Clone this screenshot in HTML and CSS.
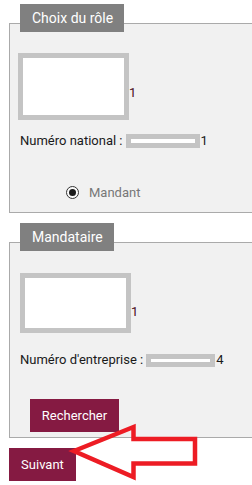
FILE: index.html
```html
<!DOCTYPE html>
<html lang="fr">
<head>
  <meta charset="UTF-8">
  <title>Choix du rôle</title>
  <link rel="stylesheet" href="styles.css">
</head>
<body>
  <div class="bloc bloc-role">
    <div class="titre">Choix du rôle</div>
    <div class="ligne-image">
      <div class="cadre cadre-role"></div>
      <span class="num num-role">1</span>
    </div>
    <div class="ligne-champ">
      <span class="label">Numéro national :</span>
      <span class="champ champ-national"></span>
      <span class="valeur">1</span>
    </div>
    <div class="ligne-radio">
      <span class="radio"></span>
      <span class="radio-label">Mandant</span>
    </div>
  </div>

  <div class="bloc bloc-mandataire">
    <div class="titre">Mandataire</div>
    <div class="ligne-image">
      <div class="cadre cadre-mandataire"></div>
      <span class="num num-mandataire">1</span>
    </div>
    <div class="ligne-champ">
      <span class="label">Numéro d'entreprise :</span>
      <span class="champ champ-entreprise"></span>
      <span class="valeur">4</span>
    </div>
    <button class="bouton bouton-rechercher" type="button">Rechercher</button>
  </div>

  <button class="bouton bouton-suivant" type="button">Suivant</button>

  <svg class="fleche" width="252" height="485" viewBox="0 0 252 485">
    <polygon points="74,451 133.5,427 133.5,439 195,439 195,463.5 133.5,463.5 133.5,477"
             fill="none" stroke="#ed1c24" stroke-width="4.5" />
  </svg>
</body>
</html>
```

FILE: styles.css
```css
html, body {
  overflow: hidden;
}

body {
  margin: 0;
  position: relative;
  width: 252px;
  height: 485px;
  background: #fff;
  font-family: Roboto, "Liberation Sans", sans-serif;
  font-size: 13px;
  color: #1a1a1a;
}

.bloc {
  margin-left: 9px;
  margin-right: -40px;
  border: 1px solid #aaa;
  background: #f1f1f1;
  padding-left: 10px;
}

.bloc-role {
  margin-top: 23px;
  padding-bottom: 13px;
}

.bloc-mandataire {
  margin-top: 29px;
  padding-bottom: 5px;
}

.titre {
  display: block;
  width: fit-content;
  margin-top: -20px;
  height: 28px;
  line-height: 28px;
  padding: 0 11px 0 12px;
  background: #808080;
  color: #fff;
  font-size: 14px;
}

.ligne-image {
  display: flex;
  align-items: flex-end;
}

.bloc-role .ligne-image {
  margin-top: 21px;
  margin-left: -2px;
}

.bloc-mandataire .ligne-image {
  margin-top: 22px;
}

.cadre {
  box-sizing: border-box;
  width: 111px;
  border: 5px solid #c4c4c4;
  background: #fff;
}

.cadre-role {
  height: 67px;
}

.cadre-mandataire {
  height: 60px;
}

.num {
  color: #4a0d1c;
  line-height: 13px;
}

.num-role {
  margin-bottom: 21px;
}

.num-mandataire {
  margin-bottom: 15px;
}

.ligne-champ {
  display: flex;
  align-items: center;
  line-height: 14px;
}

.bloc-role .ligne-champ {
  margin-top: 14px;
}

.bloc-mandataire .ligne-champ {
  margin-top: 20px;
}

.champ {
  box-sizing: border-box;
  border: 5px solid #c4c4c4;
  background: #fff;
  margin-left: 3px;
}

.champ-national {
  width: 74px;
  height: 14px;
}

.champ-entreprise {
  width: 69px;
  height: 13px;
}

.valeur {
  margin-left: 1px;
}

.ligne-radio {
  display: flex;
  align-items: center;
  margin-top: 38px;
  margin-left: 46px;
  height: 13px;
}

.radio {
  box-sizing: border-box;
  width: 13px;
  height: 13px;
  border: 1px solid #333;
  border-radius: 50%;
  background: #fafafa;
  display: flex;
  align-items: center;
  justify-content: center;
}

.radio::after {
  content: "";
  width: 7px;
  height: 7px;
  border-radius: 50%;
  background: #1a1a1a;
}

.radio-label {
  margin-left: 10px;
  color: #777;
}

.bouton {
  display: block;
  height: 33px;
  border: none;
  background: #851a42;
  color: #fff;
  font-family: Roboto, "Liberation Sans", sans-serif;
  font-size: 13px;
  padding: 0;
}

.bouton-rechercher {
  width: 89px;
  margin-top: 32px;
  margin-left: 10px;
}

.bouton-suivant {
  width: 67px;
  margin-top: 10px;
  margin-left: 9px;
}

.fleche {
  position: absolute;
  left: 0;
  top: 0;
  pointer-events: none;
}
```
